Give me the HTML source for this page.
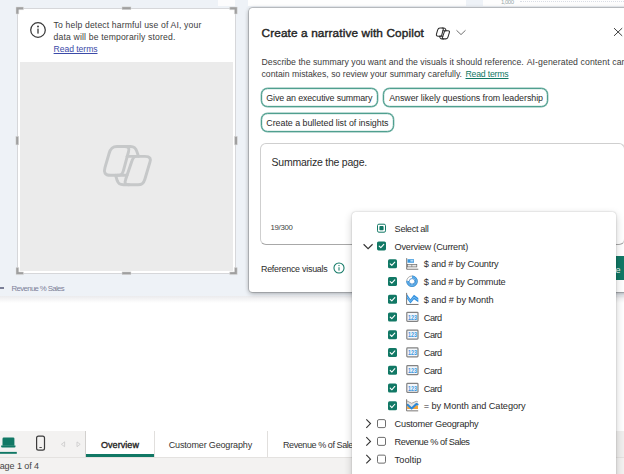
<!DOCTYPE html>
<html lang="en">
<head>
<meta charset="utf-8">
<title>Create a narrative with Copilot</title>
<style>
html,body{margin:0;padding:0;overflow:hidden;}
body{width:624px;height:474px;overflow:hidden;position:relative;background:#fff;font-family:"Liberation Sans",sans-serif;}
#root{position:absolute;left:0;top:0;width:624px;height:474px;overflow:hidden;background:#fff;}
.abs{position:absolute;}
.t{position:absolute;white-space:nowrap;font-family:"Liberation Sans",sans-serif;}
.chip{position:absolute;box-sizing:border-box;border:1px solid #4f9f8f;border-radius:6.5px;background:#fff;height:19px;box-shadow:0 0 0 0.4px rgba(79,159,143,.75), inset 0 0 0 0.3px rgba(79,159,143,.6);}
.cb{position:absolute;box-sizing:border-box;width:9px;height:9px;border-radius:1.5px;}
.cb.on{background:#117865;}
.cb.off{border:1px solid #6e6e6e;background:#fff;}
svg{position:absolute;overflow:visible;}
</style>
</head>
<body>
<div id="root">
<!-- ===== canvas ===== -->
<div class="abs" style="left:0;top:0;width:624px;height:296px;background:#eef2f7;"></div>
<div class="abs" style="left:0;top:296px;width:624px;height:7px;background:linear-gradient(#ebebed,#ffffff);"></div>
<!-- top strip visuals behind -->
<div class="abs" style="left:217.6px;top:0;width:17.6px;height:6px;background:#fcfcfd;"></div>
<div class="abs" style="left:248px;top:0;width:218px;height:6px;background:#fefefe;"></div>
<div class="abs" style="left:483px;top:0;width:141px;height:6px;background:#fdfdfd;"></div>
<div class="abs" style="left:520px;top:1px;width:104px;height:0;border-top:1px dotted #d9dde6;"></div>

<!-- left visual card -->
<div class="abs" style="left:17px;top:7.5px;width:218.6px;height:266px;background:#fff;box-sizing:border-box;border:1px solid #d6d7da;"></div>
<div class="abs" style="left:20px;top:61.8px;width:213px;height:208.8px;background:#ebebeb;"></div>
<!-- handles -->
<svg width="624" height="300" style="left:0;top:0" viewBox="0 0 624 300">
 <g fill="#9f9f9f" stroke="#dedede" stroke-width="0.5">
  <path d="M16,7 H23.5 V9.7 H18.8 V14 H16 Z"/>
  <path d="M237.2,7 H229.7 V9.7 H234.4 V14 H237.2 Z"/>
  <path d="M16,274.6 H23.5 V271.9 H18.8 V267.6 H16 Z"/>
  <path d="M237.2,274.6 H229.7 V271.9 H234.4 V267.6 H237.2 Z"/>
  <rect x="122" y="6.9" width="9" height="2.8"/>
  <rect x="122" y="271.9" width="9" height="2.8"/>
  <rect x="15.9" y="136.3" width="2.8" height="8.6"/>
  <rect x="234.5" y="136.3" width="2.8" height="8.6"/>
 </g>
</svg>
<!-- info icon -->
<svg width="18" height="18" style="left:29px;top:21px" viewBox="0 0 18 18">
 <circle cx="9" cy="9" r="7.3" fill="none" stroke="#3a3a3a" stroke-width="1.25"/>
 <rect x="8.35" y="7.6" width="1.3" height="5" fill="#3a3a3a"/>
 <circle cx="9" cy="5.5" r="0.95" fill="#3a3a3a"/>
</svg>
<svg width="54" height="50" style="left:100px;top:140px" viewBox="0 0 512 474">
 <g fill="none" stroke="#c6c8c9" stroke-width="28" stroke-linecap="round" stroke-linejoin="round">
  <path d="M160,62 H235 C275,62 280,80 270,112 L222,290 C212,325 200,335 165,335 H100 C45,335 34,305 47,262 L86,128 C100,80 118,62 160,62 Z"/>
  <path d="M235,62 H290 C330,62 340,80 350,110 L365,155"/>
  <path d="M345,155 H425 C480,155 484,180 472,215 L426,370 C413,415 396,425 360,425 H275 C236,425 232,405 243,375 L300,207 C312,166 325,155 345,155 Z"/>
  <path d="M345,155 H258"/>
  <path d="M165,335 H254"/>
  <path d="M275,425 H222 C182,425 172,410 163,385 L148,335"/>
 </g>
</svg>
<!-- revenue label dash -->
<div class="abs" style="left:0;top:287px;width:4px;height:2px;background:#7a7e96;"></div>

<!-- page tabs bar -->
<div class="abs" style="left:0;top:430.8px;width:624px;height:26.5px;background:#f0efee;"></div>
<div class="abs" style="left:0;top:430.8px;width:86px;height:26.5px;background:#f3f2f1;"></div>
<div class="abs" style="left:86px;top:430.8px;width:300px;height:26.5px;background:#fff;"></div>
<div class="abs" style="left:86px;top:454px;width:68px;height:3.2px;background:#117865;"></div>
<div class="abs" style="left:153.6px;top:430.8px;width:1px;height:26.5px;background:#e1dfdd;"></div>
<div class="abs" style="left:267px;top:430.8px;width:1px;height:26.5px;background:#e1dfdd;"></div>
<div class="abs" style="left:85px;top:430.8px;width:1px;height:26.5px;background:#d2d0ce;"></div>
<!-- status bar -->
<div class="abs" style="left:0;top:457.3px;width:624px;height:17px;background:#f3f2f1;"></div>
<div class="abs" style="left:0;top:457px;width:624px;height:0.8px;background:#e4e2e0;"></div>
<!-- desktop / mobile icons -->
<svg width="90" height="30" style="left:0;top:430px" viewBox="0 0 90 30">
 <path d="M2.5,15.7 V8.8 Q2.5,7.6 3.7,7.6 H13.2 Q14.4,7.6 14.4,8.8 V15.7 Z" fill="#117865"/>
 <path d="M1.1,15.6 H15.5 V16.5 Q15.5,17.6 14.4,17.6 H2.2 Q1.1,17.6 1.1,16.5 Z" fill="#117865"/>
 <rect x="0" y="21.9" width="16.8" height="1.9" fill="#117865"/>
 <rect x="36.6" y="6.1" width="7.9" height="14" rx="1.9" fill="none" stroke="#3b3b3b" stroke-width="1.2"/>
 <rect x="39.4" y="17" width="2.4" height="0.9" fill="#3b3b3b"/>
 <path d="M64.6,11.9 L61.4,14.3 L64.6,16.7 Z" fill="none" stroke="#c4c4c4" stroke-width="0.7"/>
 <path d="M77,11.9 L80.2,14.3 L77,16.7 Z" fill="none" stroke="#c4c4c4" stroke-width="0.7"/>
</svg>
<span class="t" style="left:53.6px;top:20.00px;font-size:8.6px;line-height:11px;font-weight:400;color:#3b3b3b;letter-spacing:0.158px;">To help detect harmful use of AI, your</span>
<span class="t" style="left:53.6px;top:32.00px;font-size:8.6px;line-height:11px;font-weight:400;color:#3b3b3b;letter-spacing:0.167px;">data will be temporarily stored.</span>
<span class="t" style="left:53.6px;top:44.00px;font-size:8.6px;line-height:11px;font-weight:400;color:#3b4aa8;letter-spacing:-0.052px;text-decoration:underline;text-decoration-thickness:0.6px;text-underline-offset:1px;">Read terms</span>
<span class="t" style="left:11.5px;top:284.00px;font-size:7.8px;line-height:10px;font-weight:400;color:#7d8199;letter-spacing:-0.632px;">Revenue % Sales</span>
<span class="t" style="left:501.0px;top:-2.00px;font-size:6px;line-height:8px;font-weight:400;color:#9aa;letter-spacing:-0.503px;">1,000</span>
<span class="t" style="left:101.0px;top:439.00px;font-size:9px;line-height:12px;font-weight:400;color:#252423;letter-spacing:0.061px;-webkit-text-stroke:0.35px #252423;">Overview</span>
<span class="t" style="left:168.7px;top:439.00px;font-size:9px;line-height:12px;font-weight:400;color:#333;letter-spacing:-0.153px;">Customer Geography</span>
<span class="t" style="left:283.0px;top:439.00px;font-size:9px;line-height:12px;font-weight:400;color:#333;letter-spacing:-0.420px;">Revenue % of Sales</span>
<span class="t" style="left:-6.3px;top:460.00px;font-size:9px;line-height:12px;font-weight:400;color:#444;letter-spacing:-0.068px;">Page 1 of 4</span>

<!-- ===== Copilot dialog ===== -->
<div class="abs" style="left:248.8px;top:8px;width:400px;height:284px;background:#fff;border-radius:3.5px;box-shadow:0 0 0 0.8px rgba(0,0,0,.2),0 0 4px rgba(0,0,0,.16),0 2px 5px rgba(0,0,0,.22);"></div>
<!-- small copilot icon -->
<svg width="13.8" height="12.8" style="left:436.2px;top:27px" viewBox="30 45 457 397">
 <g fill="none" stroke="#2e2e2e" stroke-width="35" stroke-linecap="round" stroke-linejoin="round">
  <path d="M160,62 H235 C275,62 280,80 270,112 L222,290 C212,325 200,335 165,335 H100 C45,335 34,305 47,262 L86,128 C100,80 118,62 160,62 Z"/>
  <path d="M235,62 H290 C330,62 340,80 350,110 L365,155"/>
  <path d="M345,155 H425 C480,155 484,180 472,215 L426,370 C413,415 396,425 360,425 H275 C236,425 232,405 243,375 L300,207 C312,166 325,155 345,155 Z"/>
  <path d="M345,155 H258"/>
  <path d="M165,335 H254"/>
  <path d="M275,425 H222 C182,425 172,410 163,385 L148,335"/>
 </g>
</svg>
<svg width="12" height="8" style="left:455px;top:28.3px" viewBox="0 0 12 8">
 <path d="M1.5,2.3 L6,6.6 L10.5,2.3" fill="none" stroke="#616161" stroke-width="0.9"/>
</svg>
<svg width="12" height="12" style="left:612px;top:26px" viewBox="0 0 12 12">
 <path d="M2,2.1 L10.2,9.9 M10.2,2.1 L2,9.9" fill="none" stroke="#2b2b2b" stroke-width="0.9"/>
</svg>
<!-- chips -->
<div class="chip" style="left:261px;top:88px;width:117px;"></div>
<div class="chip" style="left:383px;top:88px;width:165px;"></div>
<div class="chip" style="left:261px;top:113px;width:133px;"></div>
<!-- textarea -->
<div class="abs" style="left:260px;top:143px;width:365px;height:102px;box-sizing:border-box;border:1px solid #cfcfcf;border-bottom-color:#a8a8a8;border-radius:6px;background:#fff;"></div>
<!-- info icon green -->
<svg width="12" height="12" style="left:332.8px;top:262.4px" viewBox="0 0 12 12">
 <circle cx="6" cy="6" r="5.05" fill="none" stroke="#117865" stroke-width="1.05"/>
 <rect x="5.5" y="5.2" width="1" height="3.4" fill="#117865"/>
 <circle cx="6" cy="3.6" r="0.7" fill="#117865"/>
</svg>
<!-- create button (mostly hidden) -->
<div class="abs" style="left:590px;top:256px;width:50px;height:24px;background:#117865;border-radius:3px;"></div>
<span class="t" style="left:261.5px;top:26.00px;font-size:11.8px;line-height:15px;font-weight:400;color:#242424;letter-spacing:0.123px;-webkit-text-stroke:0.4px #242424;">Create a narrative with Copilot</span>
<span class="t" style="left:261.5px;top:57.00px;font-size:8.7px;line-height:11px;font-weight:400;color:#3b3b3b;letter-spacing:0.023px;">Describe the summary you want and the visuals it should reference.</span>
<span class="t" style="left:526.7px;top:57.00px;font-size:8.7px;line-height:11px;font-weight:400;color:#3b3b3b;letter-spacing:0.093px;">AI-generated content can</span>
<span class="t" style="left:261.5px;top:69.00px;font-size:8.7px;line-height:11px;font-weight:400;color:#3b3b3b;letter-spacing:0.006px;">contain mistakes, so review your summary carefully.</span>
<span class="t" style="left:465.5px;top:69.00px;font-size:8.7px;line-height:11px;font-weight:400;color:#117865;letter-spacing:-0.191px;text-decoration:underline;text-decoration-thickness:0.6px;text-underline-offset:1px;">Read terms</span>
<span class="t" style="left:266.3px;top:92.00px;font-size:8.9px;line-height:12px;font-weight:400;color:#2b2b2b;letter-spacing:-0.144px;">Give an executive summary</span>
<span class="t" style="left:389.2px;top:92.00px;font-size:8.9px;line-height:12px;font-weight:400;color:#2b2b2b;letter-spacing:-0.054px;">Answer likely questions from leadership</span>
<span class="t" style="left:266.3px;top:117.00px;font-size:8.9px;line-height:12px;font-weight:400;color:#2b2b2b;letter-spacing:-0.034px;">Create a bulleted list of insights</span>
<span class="t" style="left:271.5px;top:155.00px;font-size:10.5px;line-height:14px;font-weight:400;color:#2b2b2b;letter-spacing:-0.227px;">Summarize the page.</span>
<span class="t" style="left:270.4px;top:223.00px;font-size:7.8px;line-height:10px;font-weight:400;color:#444;letter-spacing:-0.260px;">19/300</span>
<span class="t" style="left:261.0px;top:263.00px;font-size:8.9px;line-height:12px;font-weight:400;color:#2b2b2b;letter-spacing:-0.238px;">Reference visuals</span>
<span class="t" style="right:3.4px;top:264px;font-size:9px;line-height:12px;font-weight:400;color:#f4fbf9;">Create</span>

<!-- ===== dropdown ===== -->
<div class="abs" style="left:351.6px;top:211.6px;width:264px;height:290px;background:#fff;border-radius:3.5px;box-shadow:0 0 1.5px rgba(0,0,0,.3),0 3px 8px rgba(0,0,0,.2);"></div>
<svg width="624" height="474" style="left:0;top:0" viewBox="0 0 624 474">
<g transform="translate(377.00,223.70)"><rect x="0.5" y="0.5" width="8" height="8" rx="1.4" fill="#fff" stroke="#117865" stroke-width="1"/><rect x="2.4" y="2.4" width="4.2" height="4.2" rx="0.8" fill="#117865"/></g>
<g transform="translate(362.60,243.06)"><path d="M1,1.2 L5.5,5.7 L10,1.2" fill="none" stroke="#333" stroke-width="1.1"/></g>
<g transform="translate(377.00,241.46)"><rect x="0" y="0" width="9" height="9" rx="1.6" fill="#117865"/><path d="M2.2,4.6 L3.8,6.2 L6.8,2.9" fill="none" stroke="#fff" stroke-width="1.1" stroke-linecap="round" stroke-linejoin="round"/></g>
<g transform="translate(388.00,259.23)"><rect x="0" y="0" width="9" height="9" rx="1.6" fill="#117865"/><path d="M2.2,4.6 L3.8,6.2 L6.8,2.9" fill="none" stroke="#fff" stroke-width="1.1" stroke-linecap="round" stroke-linejoin="round"/></g>
<g transform="translate(406.00,257.93)"><path d="M0.7,0.2 V11.3 H12.3" fill="none" stroke="#6b6967" stroke-width="0.9"/><rect x="1.5" y="1.3" width="6.5" height="3.5" fill="#3a96dd"/><rect x="4.4" y="2.1" width="3" height="1.6" fill="#b5dbf7"/><rect x="1.6" y="6.6" width="9.2" height="2.4" fill="#e8e8e8" stroke="#6b6967" stroke-width="0.7"/><path d="M5.8,6.6 V9" stroke="#6b6967" stroke-width="0.6"/></g>
<g transform="translate(388.00,277.00)"><rect x="0" y="0" width="9" height="9" rx="1.6" fill="#117865"/><path d="M2.2,4.6 L3.8,6.2 L6.8,2.9" fill="none" stroke="#fff" stroke-width="1.1" stroke-linecap="round" stroke-linejoin="round"/></g>
<g transform="translate(406.00,275.30)"><circle cx="6" cy="6" r="5.3" fill="#fff" stroke="#8a8886" stroke-width="0.7"/><circle cx="6" cy="6" r="4.4" fill="none" stroke="#3a96dd" stroke-width="2.6" stroke-dasharray="20.73 6.91" transform="rotate(-90 6 6)"/><circle cx="6" cy="6" r="4.4" fill="none" stroke="#8cc8f4" stroke-width="0.6" stroke-dasharray="20.73 6.91" transform="rotate(-90 6 6)"/><circle cx="6" cy="6" r="2.75" fill="#fff" stroke="#2b79c2" stroke-width="0.7"/></g>
<g transform="translate(388.00,294.76)"><rect x="0" y="0" width="9" height="9" rx="1.6" fill="#117865"/><path d="M2.2,4.6 L3.8,6.2 L6.8,2.9" fill="none" stroke="#fff" stroke-width="1.1" stroke-linecap="round" stroke-linejoin="round"/></g>
<g transform="translate(406.00,293.06)"><path d="M0.6,-0.2 V11.4 H12.5" fill="none" stroke="#6b6967" stroke-width="0.9"/><path d="M1,1.3 L4.4,6.1 L8,1.8 L12.3,4.9 V9.1 L8,6.1 L4.4,10.4 L1,5.7 Z" fill="#3391e0"/><path d="M1,3.6 L4.4,8.3 L8,4 L12.2,7" fill="none" stroke="#8cc8f4" stroke-width="0.8"/></g>
<g transform="translate(388.00,312.52)"><rect x="0" y="0" width="9" height="9" rx="1.6" fill="#117865"/><path d="M2.2,4.6 L3.8,6.2 L6.8,2.9" fill="none" stroke="#fff" stroke-width="1.1" stroke-linecap="round" stroke-linejoin="round"/></g>
<g transform="translate(406.00,310.82)"><rect x="0.8" y="1.5" width="11.2" height="9" rx="0.8" fill="#f3f7fb" stroke="#828282" stroke-width="1.2"/><text x="1.9" y="8.8" font-family="'Liberation Sans',sans-serif" font-size="7.8" font-weight="700" fill="#3a96dd" textLength="9" lengthAdjust="spacingAndGlyphs">123</text></g>
<g transform="translate(388.00,330.29)"><rect x="0" y="0" width="9" height="9" rx="1.6" fill="#117865"/><path d="M2.2,4.6 L3.8,6.2 L6.8,2.9" fill="none" stroke="#fff" stroke-width="1.1" stroke-linecap="round" stroke-linejoin="round"/></g>
<g transform="translate(406.00,328.59)"><rect x="0.8" y="1.5" width="11.2" height="9" rx="0.8" fill="#f3f7fb" stroke="#828282" stroke-width="1.2"/><text x="1.9" y="8.8" font-family="'Liberation Sans',sans-serif" font-size="7.8" font-weight="700" fill="#3a96dd" textLength="9" lengthAdjust="spacingAndGlyphs">123</text></g>
<g transform="translate(388.00,348.06)"><rect x="0" y="0" width="9" height="9" rx="1.6" fill="#117865"/><path d="M2.2,4.6 L3.8,6.2 L6.8,2.9" fill="none" stroke="#fff" stroke-width="1.1" stroke-linecap="round" stroke-linejoin="round"/></g>
<g transform="translate(406.00,346.36)"><rect x="0.8" y="1.5" width="11.2" height="9" rx="0.8" fill="#f3f7fb" stroke="#828282" stroke-width="1.2"/><text x="1.9" y="8.8" font-family="'Liberation Sans',sans-serif" font-size="7.8" font-weight="700" fill="#3a96dd" textLength="9" lengthAdjust="spacingAndGlyphs">123</text></g>
<g transform="translate(388.00,365.82)"><rect x="0" y="0" width="9" height="9" rx="1.6" fill="#117865"/><path d="M2.2,4.6 L3.8,6.2 L6.8,2.9" fill="none" stroke="#fff" stroke-width="1.1" stroke-linecap="round" stroke-linejoin="round"/></g>
<g transform="translate(406.00,364.12)"><rect x="0.8" y="1.5" width="11.2" height="9" rx="0.8" fill="#f3f7fb" stroke="#828282" stroke-width="1.2"/><text x="1.9" y="8.8" font-family="'Liberation Sans',sans-serif" font-size="7.8" font-weight="700" fill="#3a96dd" textLength="9" lengthAdjust="spacingAndGlyphs">123</text></g>
<g transform="translate(388.00,383.58)"><rect x="0" y="0" width="9" height="9" rx="1.6" fill="#117865"/><path d="M2.2,4.6 L3.8,6.2 L6.8,2.9" fill="none" stroke="#fff" stroke-width="1.1" stroke-linecap="round" stroke-linejoin="round"/></g>
<g transform="translate(406.00,381.88)"><rect x="0.8" y="1.5" width="11.2" height="9" rx="0.8" fill="#f3f7fb" stroke="#828282" stroke-width="1.2"/><text x="1.9" y="8.8" font-family="'Liberation Sans',sans-serif" font-size="7.8" font-weight="700" fill="#3a96dd" textLength="9" lengthAdjust="spacingAndGlyphs">123</text></g>
<g transform="translate(388.00,401.35)"><rect x="0" y="0" width="9" height="9" rx="1.6" fill="#117865"/><path d="M2.2,4.6 L3.8,6.2 L6.8,2.9" fill="none" stroke="#fff" stroke-width="1.1" stroke-linecap="round" stroke-linejoin="round"/></g>
<g transform="translate(406.00,399.65)"><path d="M0.8,1.2 L5.6,3.6 L10.4,1.6 L11.8,2 V4.8 L10.4,4.4 L5.6,8.8 L1.2,5.2 Z" fill="#e3e3e3"/><path d="M0.8,1.2 L5.6,3.6 L10.4,1.6 L11.8,2" fill="none" stroke="#8a8886" stroke-width="0.7"/><path d="M1.2,5.8 L5.6,9.6 L10.4,5.4 L12,6 V9.4 H1.2 Z" fill="#f2a23a"/><path d="M1.6,5.2 L5.6,8.8 L10.4,4.4 L11.6,4.8" fill="none" stroke="#2b88d8" stroke-width="2" stroke-linejoin="round" stroke-linecap="round"/><path d="M0.6,-0.4 V11.2 H12.2" fill="none" stroke="#6b6967" stroke-width="0.9"/></g>
<g transform="translate(364.50,418.12)"><path d="M1.8,1.3 L6,5.5 L1.8,9.7" fill="none" stroke="#333" stroke-width="1.1"/></g>
<g transform="translate(377.00,419.12)"><rect x="0.5" y="0.5" width="8" height="8" rx="1.4" fill="#fff" stroke="#6e6e6e" stroke-width="1"/></g>
<g transform="translate(364.50,435.88)"><path d="M1.8,1.3 L6,5.5 L1.8,9.7" fill="none" stroke="#333" stroke-width="1.1"/></g>
<g transform="translate(377.00,436.88)"><rect x="0.5" y="0.5" width="8" height="8" rx="1.4" fill="#fff" stroke="#6e6e6e" stroke-width="1"/></g>
<g transform="translate(364.50,453.64)"><path d="M1.8,1.3 L6,5.5 L1.8,9.7" fill="none" stroke="#333" stroke-width="1.1"/></g>
<g transform="translate(377.00,454.64)"><rect x="0.5" y="0.5" width="8" height="8" rx="1.4" fill="#fff" stroke="#6e6e6e" stroke-width="1"/></g>
</svg>
<span class="t" style="left:394.6px;top:223.00px;font-size:9.2px;line-height:12px;font-weight:400;color:#2b2b2b;letter-spacing:-0.338px;">Select all</span>
<span class="t" style="left:394.6px;top:241.00px;font-size:9.2px;line-height:12px;font-weight:400;color:#2b2b2b;letter-spacing:-0.234px;">Overview (Current)</span>
<span class="t" style="left:423.8px;top:258.00px;font-size:9.2px;line-height:12px;font-weight:400;color:#2b2b2b;letter-spacing:-0.163px;">$ and # by Country</span>
<span class="t" style="left:423.8px;top:276.00px;font-size:9.2px;line-height:12px;font-weight:400;color:#2b2b2b;letter-spacing:-0.200px;">$ and # by Commute</span>
<span class="t" style="left:423.8px;top:294.00px;font-size:9.2px;line-height:12px;font-weight:400;color:#2b2b2b;letter-spacing:-0.081px;">$ and # by Month</span>
<span class="t" style="left:423.8px;top:312.00px;font-size:9.2px;line-height:12px;font-weight:400;color:#2b2b2b;letter-spacing:-0.555px;">Card</span>
<span class="t" style="left:423.8px;top:329.00px;font-size:9.2px;line-height:12px;font-weight:400;color:#2b2b2b;letter-spacing:-0.555px;">Card</span>
<span class="t" style="left:423.8px;top:347.00px;font-size:9.2px;line-height:12px;font-weight:400;color:#2b2b2b;letter-spacing:-0.555px;">Card</span>
<span class="t" style="left:423.8px;top:365.00px;font-size:9.2px;line-height:12px;font-weight:400;color:#2b2b2b;letter-spacing:-0.555px;">Card</span>
<span class="t" style="left:423.8px;top:383.00px;font-size:9.2px;line-height:12px;font-weight:400;color:#2b2b2b;letter-spacing:-0.555px;">Card</span>
<span class="t" style="left:423.8px;top:400.00px;font-size:9.2px;line-height:12px;font-weight:400;color:#2b2b2b;letter-spacing:-0.076px;">= by Month and Category</span>
<span class="t" style="left:394.6px;top:418.00px;font-size:9.2px;line-height:12px;font-weight:400;color:#2b2b2b;letter-spacing:-0.219px;">Customer Geography</span>
<span class="t" style="left:394.6px;top:436.00px;font-size:9.2px;line-height:12px;font-weight:400;color:#2b2b2b;letter-spacing:-0.464px;">Revenue % of Sales</span>
<span class="t" style="left:394.6px;top:454.00px;font-size:9.2px;line-height:12px;font-weight:400;color:#2b2b2b;letter-spacing:0.048px;">Tooltip</span>
</div>
</body>
</html>
